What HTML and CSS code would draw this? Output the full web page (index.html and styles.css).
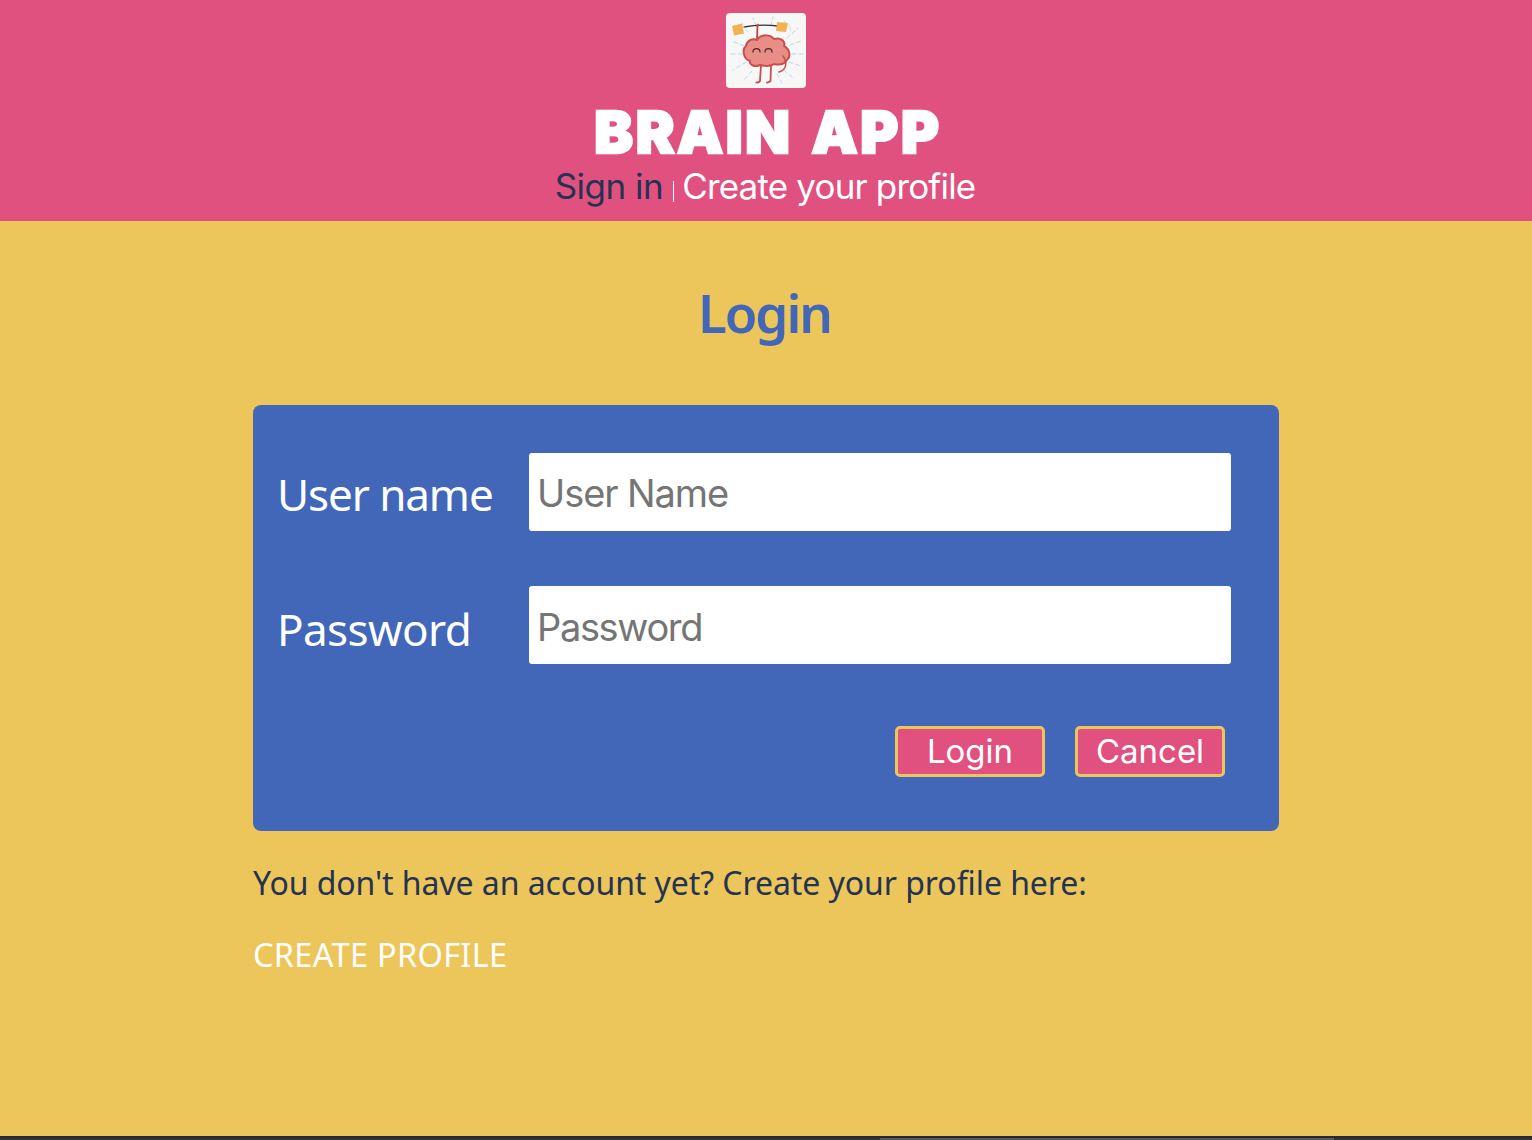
FILE: index.html
```html
<!DOCTYPE html>
<html lang="en">
<head>
<meta charset="utf-8">
<title>Brain App</title>
<link rel="stylesheet" href="styles.css">
</head>
<body>
<header class="header">
  <svg class="logo" viewBox="0 0 80 75" fill="none" stroke-linecap="round" stroke-linejoin="round">
    <g stroke="#b4dce3" stroke-width="1" stroke-dasharray="4 3">
      <path d="M22 19L13 11M30 13L27 5M45 13L47 4M54 18L60 7M61 25L72 15M64 32L75 28M66 41H78M63 49L75 53M58 57L67 65M51 61L56 70M34 63L29 71M26 58L17 68M20 49L7 57M16 41H3M18 33L6 28"/>
    </g>
    <path d="M31 27L31.500 12" stroke="#ba4747" stroke-width="1.800"/>
    <path d="M18 14Q34 11 52 13" stroke="#333" stroke-width="1.300"/>
    <path d="M6 13L16 10.500L18 20.500L8 22.500Z" fill="#f0b254"/>
    <path d="M51 9L62 10L60 19L50 18Z" fill="#f0b254"/>
    <path d="M62 10Q64 12 65 18M16 10L18 14" stroke="#ddd" stroke-width="1"/>
    <path d="M20 33C21 27 27 25 31 27C35 20 45 22 48 26C54 24 60 28 58 33C64 36 65 44 61 47C58 52 52 52 48 51C44 54 37 53 34 52C28 55 23 51 24 48C17 46 16 36 20 33Z" fill="#e98e86" stroke="#c84f4b" stroke-width="2"/>
    <path d="M35 52L34 68Q32 70 30.500 69.500M45 52L44.500 68Q42 70 41 69.500" stroke="#c84f4b" stroke-width="1.800"/>
    <path d="M57 43C62 50 60 57 53 59" stroke="#c84f4b" stroke-width="1.600"/>
    <path d="M27 39C27 34.500 34 34.500 34 39M39 39C39 34.500 46 34.500 46 39" stroke="#54282b" stroke-width="1.300"/>
    <circle cx="32" cy="12" r="1.300" fill="#c84f4b"/>
  </svg>
  <h1 class="title">BRAIN APP</h1>
  <nav class="nav"><a class="sign-in">Sign in</a><span class="separator"></span><a class="create">Create your profile</a></nav>
</header>
<main class="main">
  <h2 class="heading">Login</h2>
  <form class="form">
    <label class="row"><span class="label label-user">User name</span><input class="input input-user" type="text" placeholder="User Name"></label>
    <label class="row"><span class="label label-pass">Password</span><input class="input input-pass" type="password" placeholder="Password"></label>
    <div class="actions"><button class="button" type="button">Login</button><button class="button" type="button">Cancel</button></div>
  </form>
  <p class="prompt">You don't have an account yet? Create your profile here:</p>
  <a class="profile-link">CREATE PROFILE</a>
</main>
<footer class="bottom-bar"><div class="thumb"></div></footer>
</body>
</html>
```
FILE: styles.css
```css
* { box-sizing: border-box; }
body {
  margin: 0;
  height: 1140px;
  display: flex;
  flex-direction: column;
  overflow: hidden;
  background: #ecc65a;
  color: #fff;
  font-family: "Noto Sans", sans-serif;
}
.header {
  height: 221px;
  padding-top: 13px;
  display: flex;
  flex-direction: column;
  align-items: center;
  background: #e0517f;
}
.logo { width: 80px; height: 75px; border-radius: 4px; background: #f7f7f7; }
.title {
  margin: 14px 0 0;
  padding-left: 4px;
  font: 900 58px/60px Inter, sans-serif;
  letter-spacing: 2.6px;
  word-spacing: 5px;
  -webkit-text-stroke: 2.4px #fff;
  white-space: nowrap;
}
.nav {
  display: flex;
  align-items: center;
  margin-top: 2px;
  padding-right: 2px;
  font: 35px/44px Inter, sans-serif;
  white-space: nowrap;
}
.sign-in { color: #253352; letter-spacing: -0.5px; }
.create { letter-spacing: -0.83px; }
.separator { width: 1px; height: 21px; margin: 10px 8px 0 10px; background: #fff; }
.main { flex: 1; width: 1026px; margin: 0 auto; }
.heading {
  margin: 62px 0 0;
  font-size: 53px;
  line-height: 60px;
  font-weight: 600;
  letter-spacing: -2.1px;
  text-indent: -3px;
  text-align: center;
  color: #4267b8;
}
.form {
  margin-top: 61.5px;
  height: 426px;
  padding: 48px 48px 0 25px;
  border-radius: 8px;
  background: #4267b8;
}
.row { display: flex; align-items: center; height: 78px; margin-bottom: 55.500px; }
.label { width: 251px; margin-left: -1px; margin-right: 1px; padding-top: 5px; font-size: 44px; line-height: 60px; white-space: nowrap; }
.label-user { letter-spacing: -1.1px; }
.label-pass { padding-top: 7px; letter-spacing: -0.6px; }
.input {
  width: 702px;
  height: 78px;
  padding: 3px 8px 0;
  border: 0;
  border-radius: 3px;
  background: #fff;
  font: 38px Inter, sans-serif;
}
.input-user { letter-spacing: -1.1px; }
.input-pass { padding-top: 4px; letter-spacing: -1.35px; }
.input::placeholder { color: #757575; opacity: 1; }
.actions { display: flex; justify-content: flex-end; gap: 30px; padding: 6px 6px 0 0; }
.button {
  width: 150px;
  height: 51px;
  padding: 0;
  border: 3px solid #ecc65a;
  border-radius: 5px;
  background: #e0517f;
  color: #fff;
  font: 33px/45px Inter, sans-serif;
}
.prompt { margin: 29.5px 0 0; font-size: 32px; line-height: 46px; letter-spacing: -0.07px; color: #253352; white-space: nowrap; }
.profile-link { display: block; width: max-content; margin-top: 26px; font-size: 32.5px; line-height: 46px; letter-spacing: 0.3px; }
.bottom-bar { height: 4px; padding: 2px 0 0 880px; background: linear-gradient(#29292c 2px, #343238 2px); }
.thumb { width: 454px; height: 2px; background: #5c5960; }
```
